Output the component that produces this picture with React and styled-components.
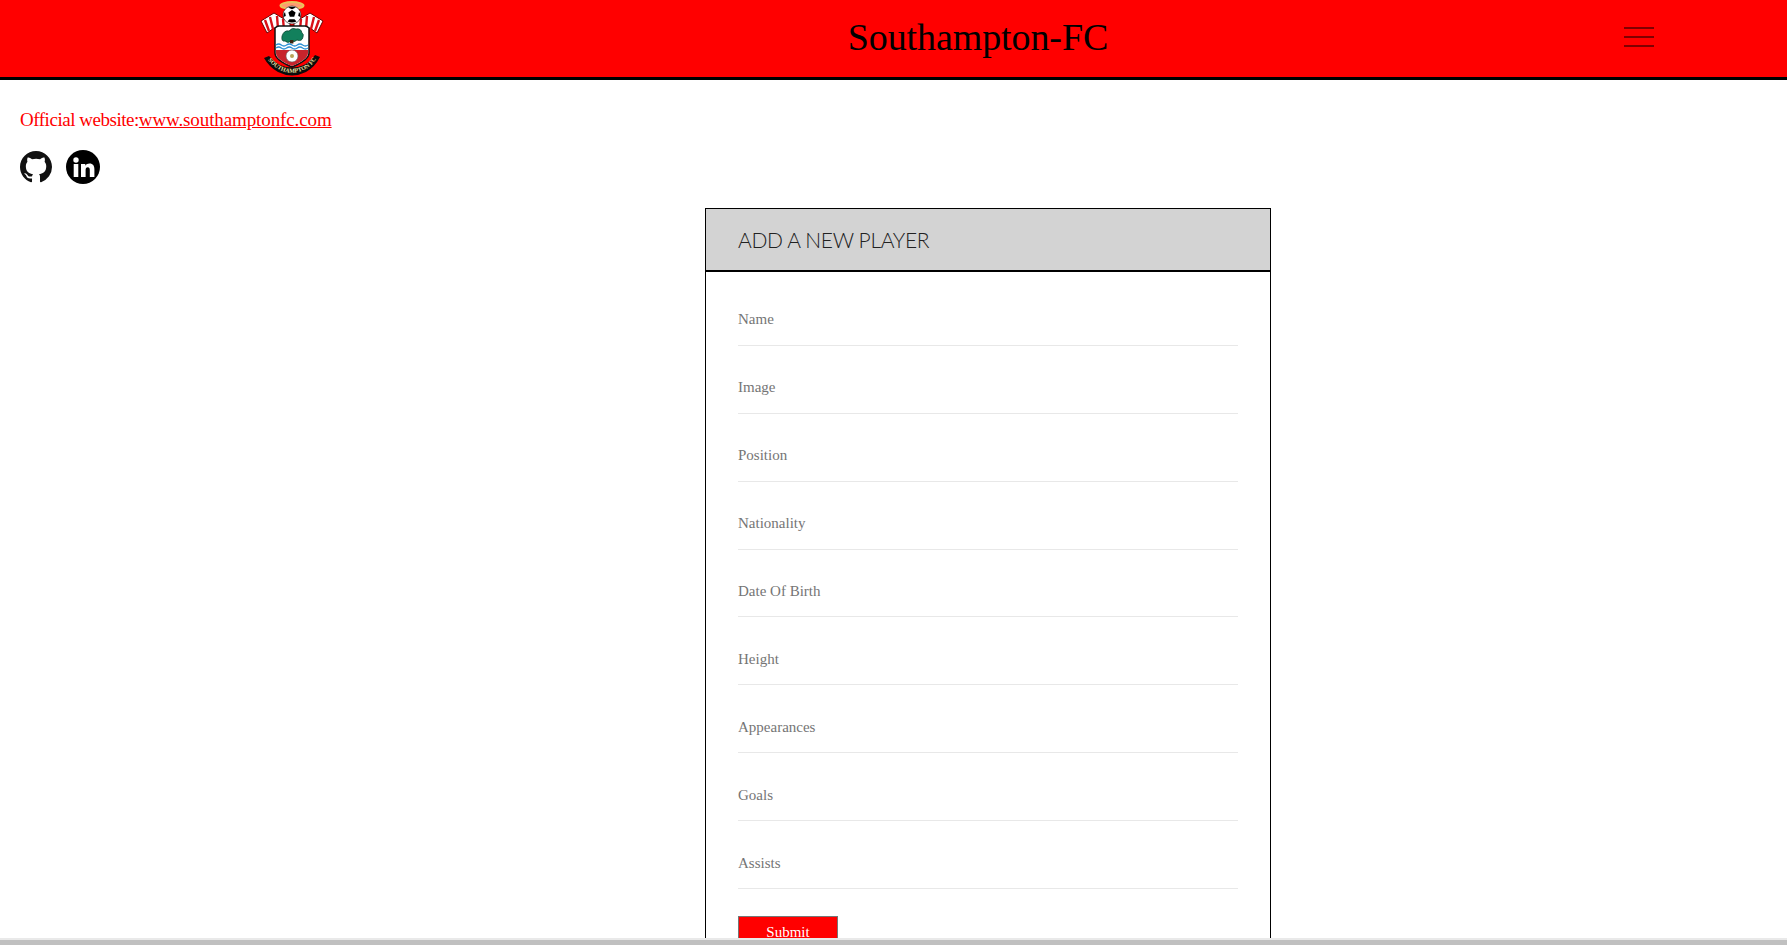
import React from 'react';
import styled, { createGlobalStyle } from 'styled-components';

const GlobalStyle = createGlobalStyle`
  html, body {
    margin: 0;
    height: 100%;
    overflow: hidden;
    background: #fff;
  }
  * {
    box-sizing: border-box;
  }
`;

const serif = `"Liberation Serif", "Noto Serif", serif`;

const Screen = styled.div`
  height: 945px;
  display: flex;
  flex-direction: column;
`;

const Viewport = styled.div`
  flex: 1;
  min-height: 0;
  overflow: hidden;
  font-family: ${serif};
`;

const ScrollTrack = styled.div`
  height: 7px;
  flex: none;
  background: #c0c0c0;
  border-top: 2px solid #e9e9e9;
`;

const Header = styled.header`
  height: 80px;
  display: grid;
  grid-template-columns: 260px 64px 1fr 30px 133px;
  align-items: center;
  background: #ff0000;
  border-bottom: 3px solid #000;
`;

const Title = styled.h1`
  grid-column: 3;
  margin: 0 0 3px;
  padding-left: 8px;
  text-align: center;
  font-size: 38px;
  font-weight: 400;
  letter-spacing: -0.1px;
  color: #000;
`;

const Crest = styled.svg`
  grid-column: 2;
  display: block;
  width: 64px;
  height: 77px;
`;

const Burger = styled.button`
  grid-column: 4;
  align-self: start;
  width: 30px;
  height: 20px;
  margin-top: 27px;
  padding: 0;
  border: 0;
  background: none;
  display: flex;
  flex-direction: column;
  justify-content: space-between;
`;

const BurgerLine = styled.span`
  height: 2px;
  background: #800000;
`;

const Site = styled.p`
  margin: 29px 0 0 20px;
  font-size: 19px;
  line-height: 21px;
  letter-spacing: -0.47px;
  color: #ff0000;
`;

const SiteLink = styled.a`
  color: #ff0000;
  letter-spacing: -0.11px;
  text-decoration: underline;
`;

const Socials = styled.div`
  display: flex;
  align-items: center;
  gap: 14px;
  margin: 20px 0 0 20px;
  height: 34px;
`;

const SocialIcon = styled.svg`
  display: block;
  width: ${(p) => p.$size}px;
  height: ${(p) => p.$size}px;
`;

const Card = styled.section`
  width: 566px;
  margin: 24px 0 0 705px;
  border: 1px solid #000;
  border-bottom: 0;
`;

const CardHead = styled.div`
  height: 63px;
  display: flex;
  align-items: center;
  padding-left: 32px;
  background: #d3d3d3;
  border-bottom: 2px solid #000;
`;

const CardTitle = styled.h2`
  margin: 0;
  font-family: Lato, "Open Sans", sans-serif;
  font-size: 21px;
  font-weight: 300;
  letter-spacing: -0.35px;
  color: #212121;
`;

const Form = styled.form`
  padding: 6px 32px 40px;
  display: flex;
  flex-direction: column;
`;

const Field = styled.input`
  display: block;
  width: 100%;
  height: 67.9px;
  padding: 33px 0 16px;
  border: 0;
  border-bottom: 1px solid #e8e8e8;
  outline: none;
  font-family: ${serif};
  font-size: 15px;
  color: #333;

  &::placeholder {
    color: #757575;
    opacity: 1;
  }
`;

const Submit = styled.button`
  width: 100px;
  height: 33px;
  margin-top: 27px;
  padding: 0;
  border: 1px solid #767676;
  background: #ff0000;
  color: #fff;
  font-family: ${serif};
  font-size: 15px;
`;

const fields = ['Name', 'Image', 'Position', 'Nationality', 'Date Of Birth', 'Height', 'Appearances', 'Goals', 'Assists'];

function SaintsCrest() {
  return (
    <Crest viewBox="0 0 64 77">
      {/* halo */}
      <ellipse cx="32" cy="5.5" rx="11.5" ry="3.4" fill="#ff9a70" stroke="#e9c25a" strokeWidth="2" />
      {/* banners either side of the ball */}
      <path d="M1 21 L14 13 L24 19 L30 23 L30 33 L22 29 L14 28 L7 33 Z" fill="#fff" stroke="#6d0000" strokeWidth="1" />
      <path d="M63 21 L50 13 L40 19 L34 23 L34 33 L42 29 L50 28 L57 33 Z" fill="#fff" stroke="#6d0000" strokeWidth="1" />
      <path d="M5 20 L9 31 M10 17 L13 29 M17 16 L18 29 M23 19 L24 30 M59 20 L55 31 M54 17 L51 29 M47 16 L46 29 M41 19 L40 30" stroke="#d81018" strokeWidth="2.4" />
      {/* shield */}
      <path d="M15 28 Q17 26 19 26 H45 Q47 26 49 28 V53 Q49 60 32 67 Q15 60 15 53 Z" fill="#fff" stroke="#111" strokeWidth="1.5" />
      <path d="M16 50 H48 V53 Q48 59.5 32 66 Q16 59.5 16 53 Z" fill="#c8242c" />
      {/* tree */}
      <path d="M22 36 q2 -6 7 -5 q3 -4 7 -2 q5 -1 6 4 q2 1 1 4 q-1 5 -6 3 q-3 3 -6 1 q-3 3 -6 0 q-4 1 -3 -5 Z" fill="#12805c" stroke="#0b3f2e" strokeWidth="0.7" />
      <path d="M30 40 h3.4 v3.5 h-3.4 Z" fill="#3c2410" />
      {/* water */}
      <path d="M16 45 q2.7 -2 5.3 0 t5.3 0 t5.4 0 t5.3 0 t5.3 0 t5.4 0" fill="none" stroke="#2b8fd4" strokeWidth="1.3" />
      <path d="M16 48 q2.7 -2 5.3 0 t5.3 0 t5.4 0 t5.3 0 t5.3 0 t5.4 0" fill="none" stroke="#2b8fd4" strokeWidth="1.3" />
      {/* rose */}
      <circle cx="32" cy="56" r="6" fill="#fff" stroke="#666" strokeWidth="0.6" />
      <circle cx="32" cy="56" r="2" fill="#b9a35a" />
      {/* ball */}
      <circle cx="32" cy="15" r="9" fill="#fff" stroke="#222" strokeWidth="0.6" />
      <path d="M32 10 l3.6 2.6 -1.4 4.2 h-4.4 l-1.4 -4.2 Z" fill="#000" />
      <path d="M25 12 q-2 2 -1.6 5 l2.4 -1 Z M39 12 q2 2 1.6 5 l-2.4 -1 Z M27.5 21.5 q4.5 2 9 0 l-2 -2.2 h-5 Z M28 7.6 q4 -1.6 8 0 l-4 1.6 Z" fill="#000" />
      {/* ribbon */}
      <path d="M4 58 L9 56 Q14 62 20 65 Q32 70 44 65 Q51 61 55 55 L60 57 Q55 67 46 72 Q32 79 18 72 Q9 67 4 58 Z" fill="#0b0b0b" />
      <path id="crestRibbon" d="M8 60 Q13 66 19 69.5 Q32 76 45 69.5 Q52 66 56 59" fill="none" />
      <text fontFamily="Liberation Serif, serif" fontSize="6" fontWeight="700" fill="#f0e6a8">
        <textPath href="#crestRibbon" startOffset="50%" textAnchor="middle">SOUTHAMPTON FC</textPath>
      </text>
    </Crest>
  );
}

export default function App() {
  return (
    <Screen>
      <GlobalStyle />
      <Viewport>
        <Header>
          <SaintsCrest />
          <Title>Southampton-FC</Title>
          <Burger aria-label="menu">
            <BurgerLine />
            <BurgerLine />
            <BurgerLine />
          </Burger>
        </Header>
        <Site>
          Official website:<SiteLink href="#">www.southamptonfc.com</SiteLink>
        </Site>
        <Socials>
          <SocialIcon $size={32} viewBox="0 0 16 16" fill="#111">
            <path d="M8 0C3.58 0 0 3.58 0 8c0 3.54 2.29 6.53 5.47 7.59.4.07.55-.17.55-.38 0-.19-.01-.82-.01-1.49-2.01.37-2.53-.49-2.69-.94-.09-.23-.48-.94-.82-1.13-.28-.15-.68-.52-.01-.53.63-.01 1.08.58 1.23.82.72 1.21 1.87.87 2.33.66.07-.52.28-.87.51-1.07-1.78-.2-3.64-.89-3.64-3.95 0-.87.31-1.59.82-2.15-.08-.2-.36-1.02.08-2.12 0 0 .67-.21 2.2.82.64-.18 1.32-.27 2-.27.68 0 1.36.09 2 .27 1.53-1.04 2.2-.82 2.2-.82.44 1.1.16 1.92.08 2.12.51.56.82 1.27.82 2.15 0 3.07-1.87 3.75-3.65 3.95.29.25.54.73.54 1.48 0 1.07-.01 1.93-.01 2.2 0 .21.15.46.55.38A8.013 8.013 0 0016 8c0-4.42-3.58-8-8-8z" />
          </SocialIcon>
          <SocialIcon $size={34} viewBox="0 0 34 34">
            <circle cx="17" cy="17" r="17" fill="#000" />
            <circle cx="10" cy="10" r="2.7" fill="#fff" />
            <path d="M7.7 14h4.6v13H7.7z M15 14h4.3v1.8c.8-1.3 2.4-2.2 4.2-2.2 3.5 0 4.9 2.3 4.9 5.7V27h-4.6v-6.9c0-1.8-.6-2.8-2-2.8-1.6 0-2.2 1.2-2.2 3V27H15z" fill="#fff" />
          </SocialIcon>
        </Socials>
        <Card>
          <CardHead>
            <CardTitle>ADD A NEW PLAYER</CardTitle>
          </CardHead>
          <Form>
            {fields.map((name) => (
              <Field key={name} placeholder={name} />
            ))}
            <Submit type="button">Submit</Submit>
          </Form>
        </Card>
      </Viewport>
      <ScrollTrack />
    </Screen>
  );
}
